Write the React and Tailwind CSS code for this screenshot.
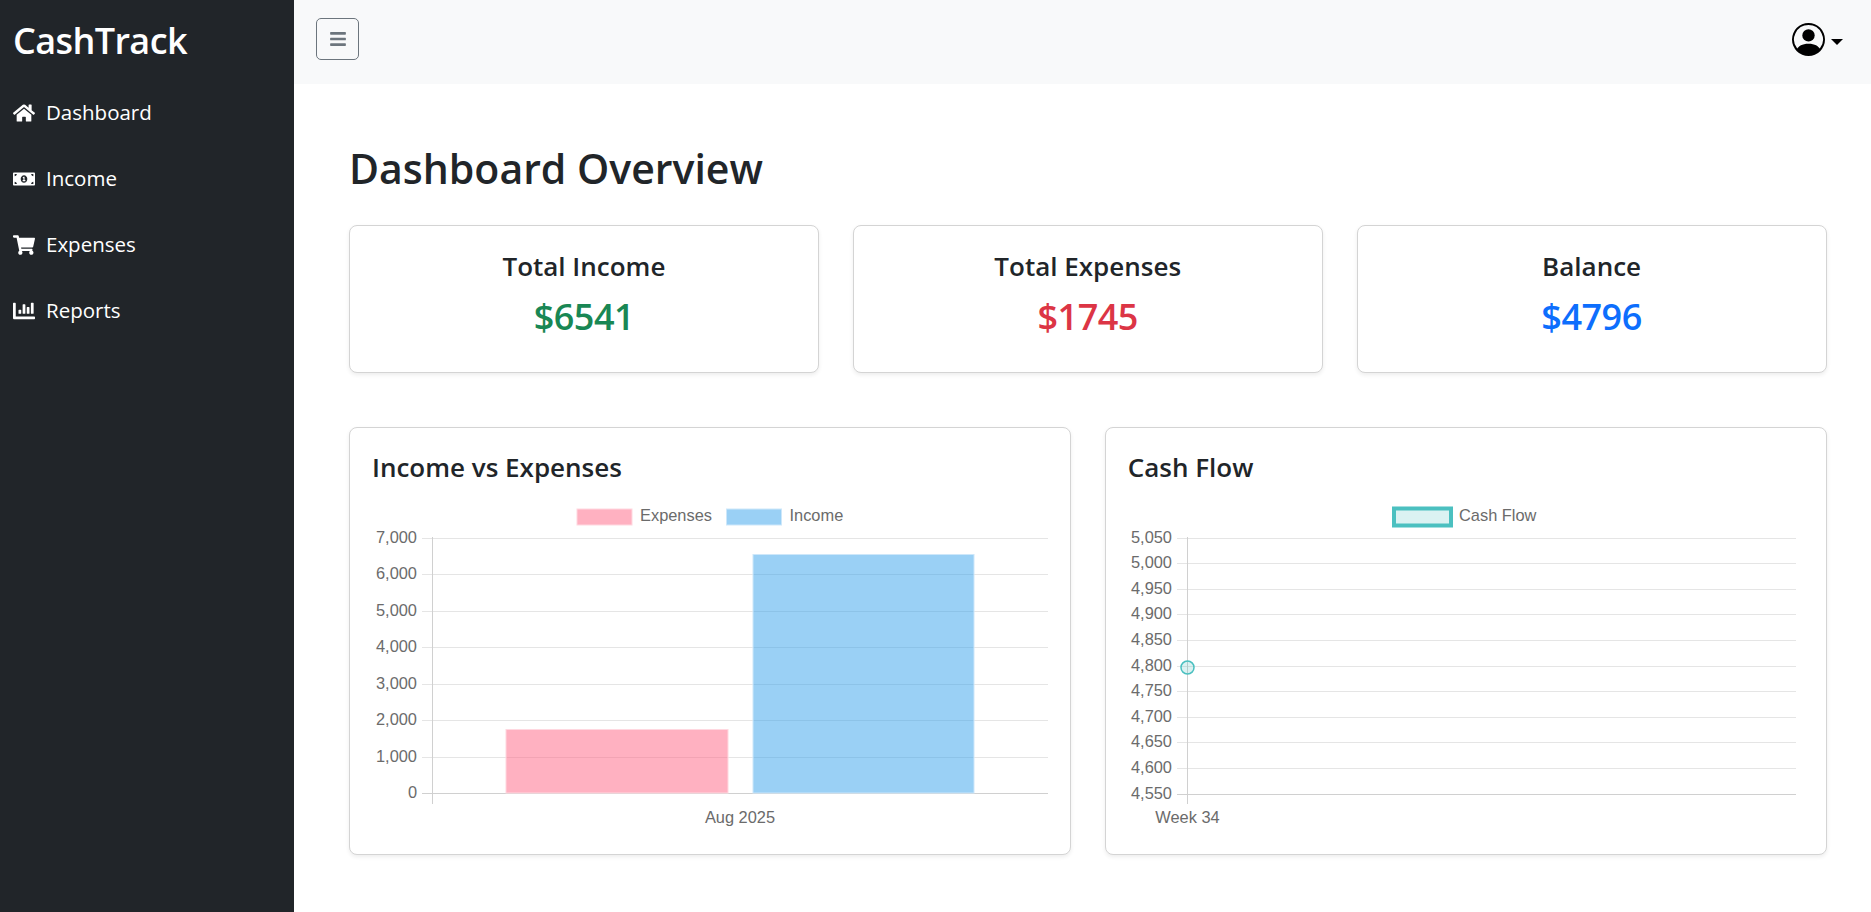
import { FaHome, FaMoneyBillAlt, FaShoppingCart, FaChartBar, FaBars } from 'react-icons/fa';
import { BsPersonCircle } from 'react-icons/bs';

const navItems = [
    { label: 'Dashboard', icon: FaHome },
    { label: 'Income', icon: FaMoneyBillAlt },
    { label: 'Expenses', icon: FaShoppingCart },
    { label: 'Reports', icon: FaChartBar },
];

const stats = [
    { title: 'Total Income', value: '$6541', color: 'text-[#198754]' },
    { title: 'Total Expenses', value: '$1745', color: 'text-[#dc3545]' },
    { title: 'Balance', value: '$4796', color: 'text-[#0d6efd]' },
];

const CHART_FONT = '"Liberation Sans", Arial, sans-serif';
const GRID = '#e5e5e5';
const AXIS = '#d0d0d0';
const LABEL = '#6b6b6b';

const AxisLabel = ({ x, y, anchor = 'end', children }) => (
    <text x={x} y={y} textAnchor={anchor} dominantBaseline="middle" fontFamily={CHART_FONT} fontSize="16.4" fill={LABEL}>
        {children}
    </text>
);

const IncomeChart = () => {
    const ticks = ['7,000', '6,000', '5,000', '4,000', '3,000', '2,000', '1,000', '0'];
    const top = 537.5;
    const step = 36.57;
    return (
        <svg width="676" height="340" viewBox="372 496 676 340" className="block">
            <rect x="577" y="509" width="55" height="16" fill="#ffb1c1" stroke="#ffd8e0" />
            <AxisLabel x={640} y={517} anchor="start">Expenses</AxisLabel>
            <rect x="726.5" y="509" width="55" height="16" fill="#9ad0f5" stroke="#cde7fa" />
            <AxisLabel x={789.5} y={517} anchor="start">Income</AxisLabel>
            {ticks.map((t, i) => {
                const y = Math.round(top + i * step) + 0.5;
                return (
                    <g key={t}>
                        <line x1="422" x2="1048" y1={y} y2={y} stroke={i === ticks.length - 1 ? AXIS : GRID} />
                        <AxisLabel x={417} y={y}>{t}</AxisLabel>
                    </g>
                );
            })}
            <line x1="432.5" x2="432.5" y1="537" y2="804" stroke={AXIS} />
            <rect x="506" y="729.5" width="222" height="63.5" fill="#ff6384" fillOpacity="0.5" stroke="#ffd8e0" strokeWidth="1" />
            <rect x="753" y="554.5" width="221" height="238.5" fill="#36a2eb" fillOpacity="0.5" stroke="#cde7fa" strokeWidth="1" />
            <AxisLabel x={740} y={819} anchor="middle">Aug 2025</AxisLabel>
        </svg>
    );
};

const CashFlowChart = () => {
    const ticks = ['5,050', '5,000', '4,950', '4,900', '4,850', '4,800', '4,750', '4,700', '4,650', '4,600', '4,550'];
    const top = 537.5;
    const step = 25.6;
    return (
        <svg width="676" height="340" viewBox="1128 496 676 340" className="block">
            <rect x="1394" y="508.5" width="57" height="17" fill="#4bc0c0" fillOpacity="0.2" stroke="#4bc0c0" strokeWidth="4" />
            <AxisLabel x={1459} y={517} anchor="start">Cash Flow</AxisLabel>
            {ticks.map((t, i) => {
                const y = Math.round(top + i * step) + 0.5;
                return (
                    <g key={t}>
                        <line x1="1177" x2="1796" y1={y} y2={y} stroke={i === ticks.length - 1 ? AXIS : GRID} />
                        <AxisLabel x={1172} y={y}>{t}</AxisLabel>
                    </g>
                );
            })}
            <line x1="1187.5" x2="1187.5" y1="537" y2="804" stroke={AXIS} />
            <circle cx="1187.5" cy="667.5" r="6.5" fill="#4bc0c0" fillOpacity="0.2" stroke="#4bc0c0" strokeWidth="1.5" />
            <AxisLabel x={1187.5} y={819} anchor="middle">Week 34</AxisLabel>
        </svg>
    );
};

const Card = ({ className = '', children }) => (
    <div className={`bg-white border border-[#d4d4d4] rounded-lg shadow-[0_2px_4px_rgba(0,0,0,0.075)] ${className}`}>
        {children}
    </div>
);

const App = () => {
    return (
        <div className="flex min-h-[912px] bg-white text-[#212529] font-['Open_Sans','Noto_Sans',sans-serif]">
            <aside className="w-[294px] shrink-0 bg-[#212529] text-white">
                <div className="h-[79px] pt-[3px] pl-[13px] flex items-center text-[36px] font-semibold tracking-[-0.6px]">CashTrack</div>
                <nav className="flex flex-col">
                    {navItems.map(({ label, icon: Icon }) => (
                        <a key={label} href="#" className="h-[66px] pl-[13px] flex items-center gap-[11px] text-[20.5px]">
                            <Icon className="w-[22px] h-[22px] shrink-0 mt-[2px]" />
                            {label}
                        </a>
                    ))}
                </nav>
            </aside>

            <div className="flex-1 flex flex-col">
                <header className="h-[84px] bg-[#f8f9fa] flex items-start justify-between pl-[22px] pr-[28px] pt-[18px]">
                    <button className="w-[43px] h-[42px] flex items-center justify-center border border-[#6c757d] rounded-[5px] text-[#6c757d]">
                        <FaBars className="w-[18px] h-[18px]" />
                    </button>
                    <div className="flex items-center gap-[6px] text-black pt-[5px]">
                        <BsPersonCircle className="w-[33px] h-[33px]" />
                        <span className="mt-[5px] border-x-[6px] border-x-transparent border-t-[6px] border-t-black" />
                    </div>
                </header>

                <main className="pl-[55px] pr-[44.5px] pt-[57px]">
                    <h1 className="text-[41px] leading-[54px] font-semibold mb-[30px]">Dashboard Overview</h1>

                    <div className="grid grid-cols-3 gap-[34px] mb-[54px]">
                        {stats.map((s) => (
                            <Card key={s.title} className="h-[148px] flex flex-col items-center pt-[24px]">
                                <div className="text-[26px] leading-[32px] font-semibold mb-[11px]">{s.title}</div>
                                <div className={`text-[36px] leading-[48px] font-semibold tracking-[-0.5px] ${s.color}`}>{s.value}</div>
                            </Card>
                        ))}
                    </div>

                    <div className="flex gap-[34px]">
                        <Card className="flex-1 h-[428px] pl-[22px] pt-[20px]">
                            <h5 className="text-[26px] leading-[32px] font-semibold pt-[3px] mb-[13px]">Income vs Expenses</h5>
                            <IncomeChart />
                        </Card>
                        <Card className="flex-1 h-[428px] pl-[22px] pt-[20px]">
                            <h5 className="text-[26px] leading-[32px] font-semibold pt-[3px] mb-[13px]">Cash Flow</h5>
                            <CashFlowChart />
                        </Card>
                    </div>
                </main>
            </div>
        </div>
    );
};

export default App;
